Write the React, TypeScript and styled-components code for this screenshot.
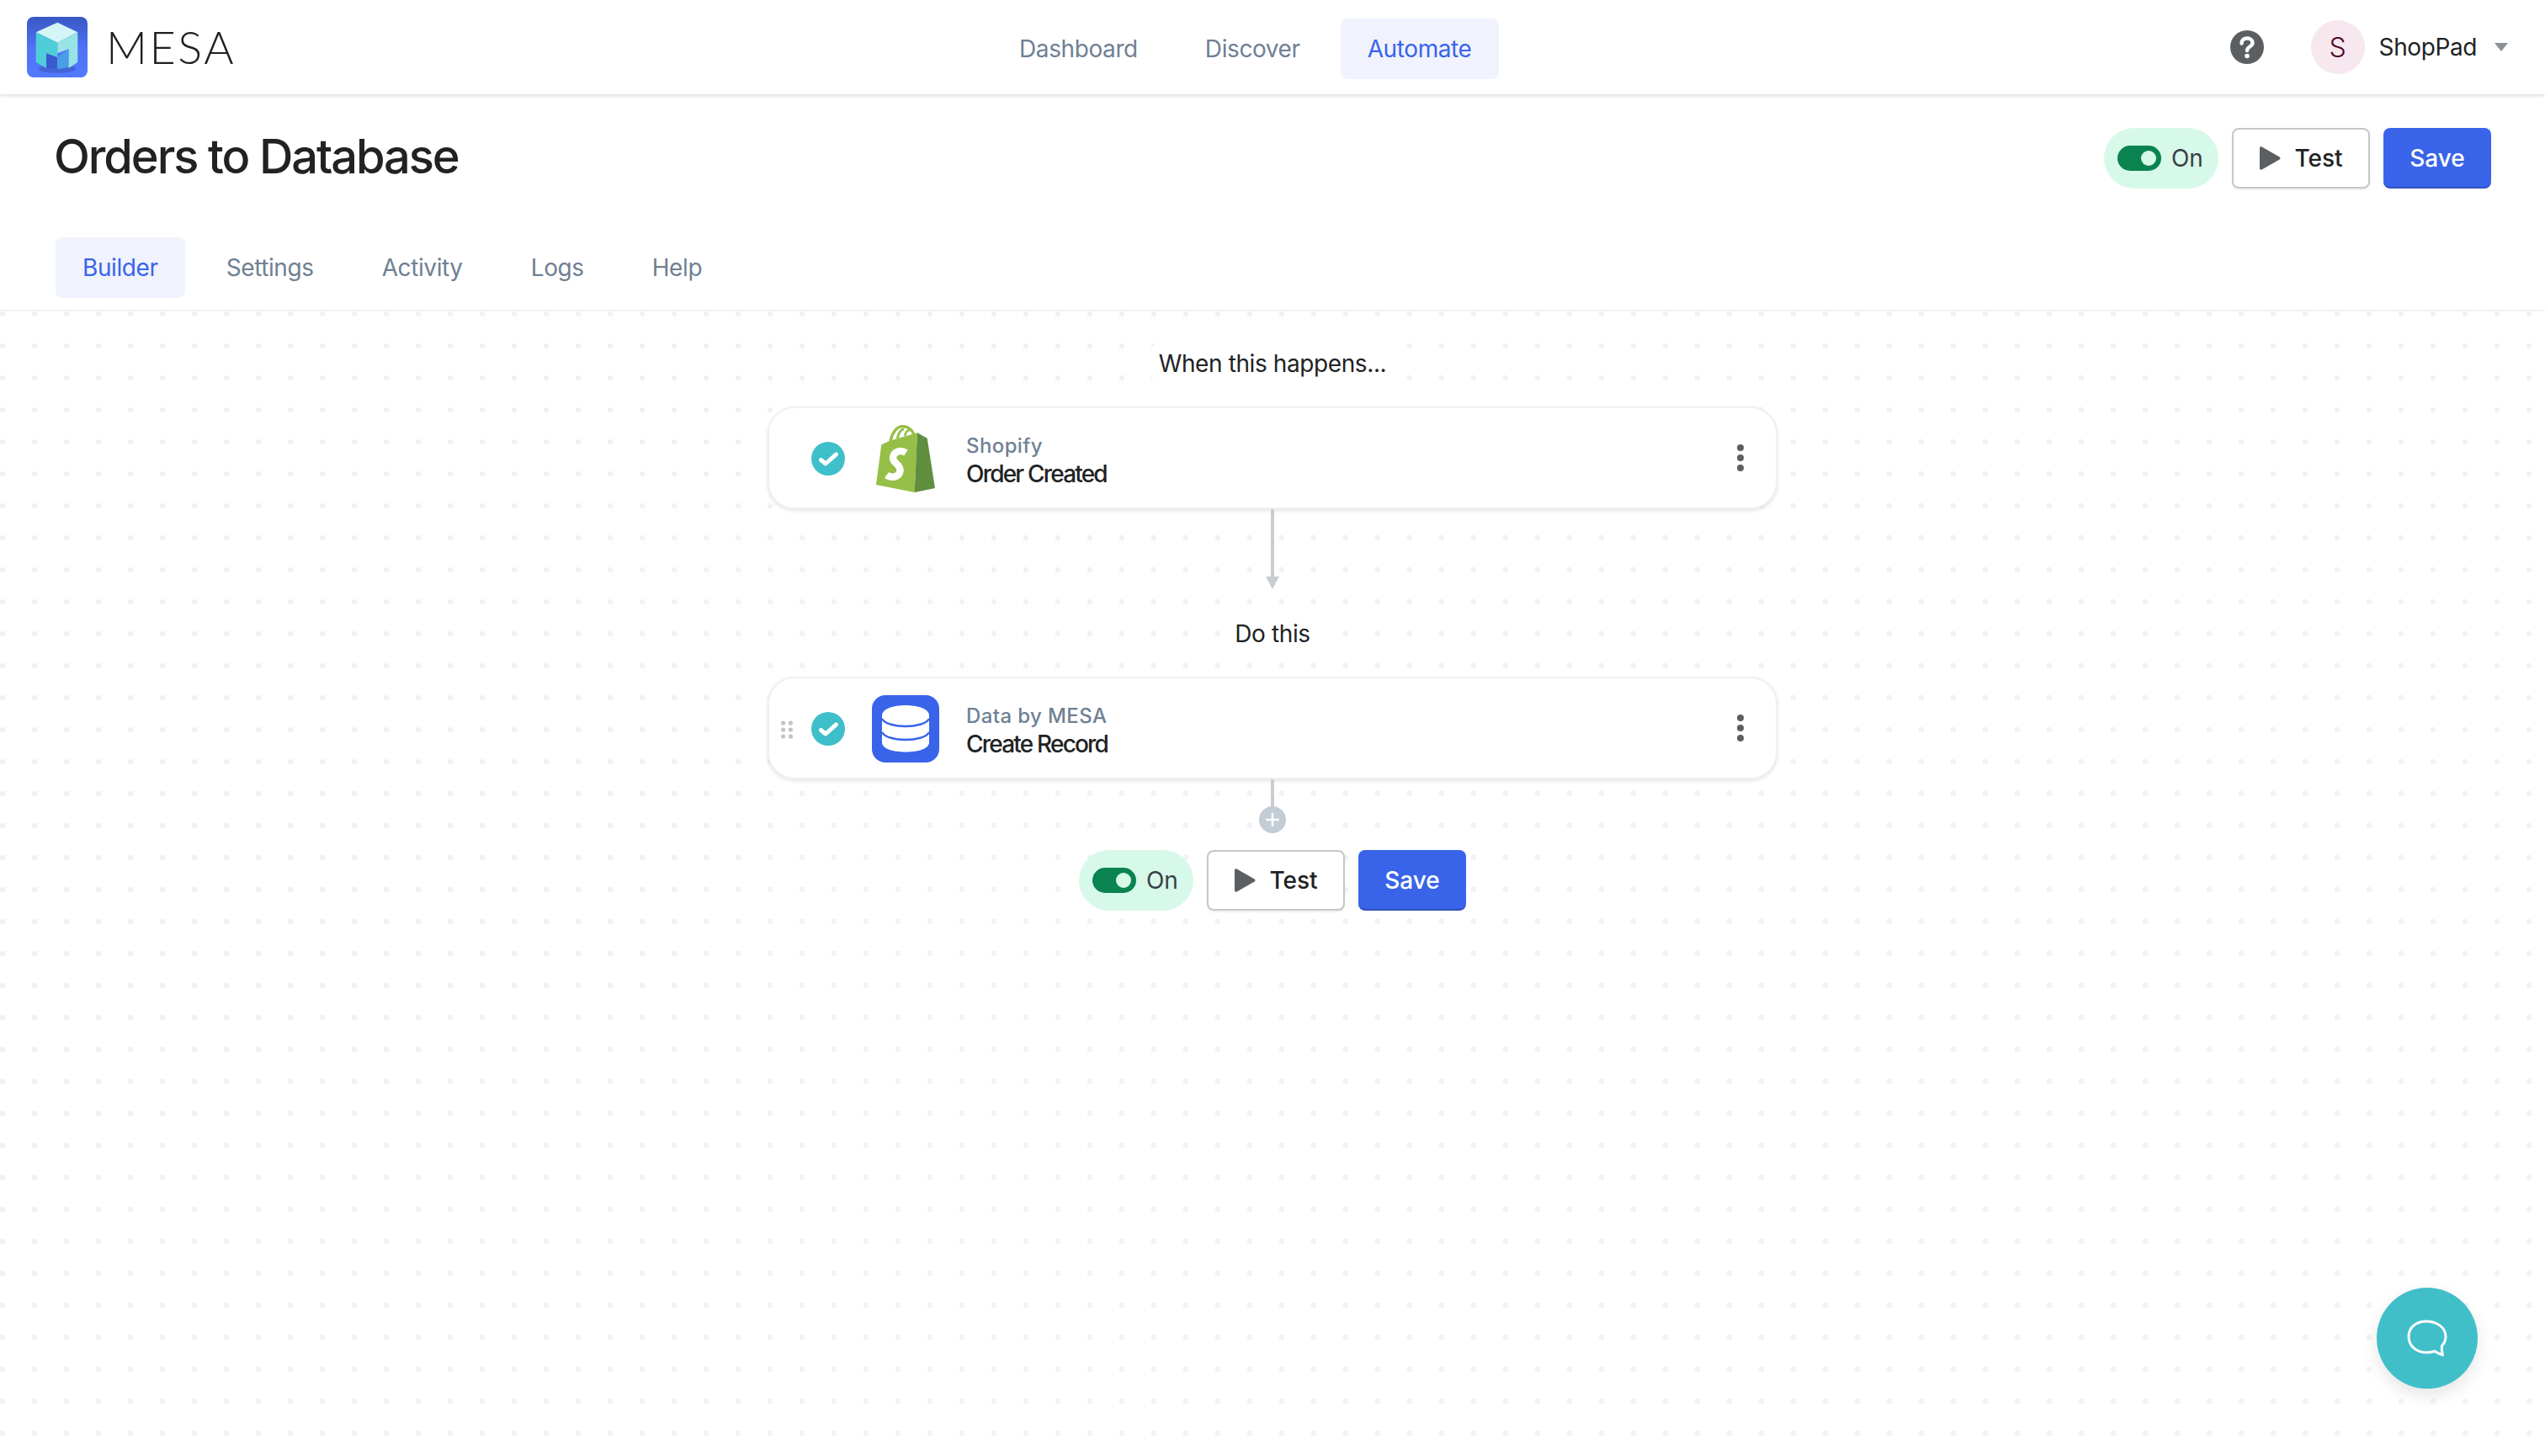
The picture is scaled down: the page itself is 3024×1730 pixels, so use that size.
import * as React from 'react'
import styled, { createGlobalStyle } from 'styled-components'

const GlobalStyle = createGlobalStyle`
  html, body {
    margin: 0;
    padding: 0;
    background: #fff;
    font-family: Inter, "Liberation Sans", sans-serif;
    color: #202223;
  }
  * {
    box-sizing: border-box;
  }
`

const Page = styled.div`
  width: 3024px;
  height: 1730px;
  overflow: hidden;
  display: flex;
  flex-direction: column;
`

const TopBar = styled.header`
  height: 112px;
  flex: none;
  display: flex;
  align-items: center;
  padding: 0 44px 0 32px;
  background: #fff;
  box-shadow: 0 2px 4px rgba(60, 66, 87, 0.18);
  position: relative;
  z-index: 1;
`

const Brand = styled.div`
  width: 244px;
  display: flex;
  align-items: center;
  gap: 22px;
`

const BrandName = styled.span`
  font-family: Lato, sans-serif;
  font-weight: 300;
  font-size: 54px;
  line-height: 72px;
  letter-spacing: 2.5px;
  color: #231f20;
`

const MainNav = styled.nav`
  margin-left: 903px;
  margin-top: 4px;
  display: flex;
  gap: 16px;
`

const TabLink = styled.a<{ $active?: boolean }>`
  height: 72px;
  padding: 0 32px;
  display: flex;
  align-items: center;
  border-radius: 8px;
  font-size: 28px;
  letter-spacing: -0.4px;
  color: ${p => (p.$active ? '#3964e9' : '#6f8094')};
  background: ${p => (p.$active ? '#f0f3fe' : 'transparent')};
`

const Account = styled.div`
  margin-left: auto;
  display: flex;
  align-items: center;
`

const Avatar = styled.div`
  width: 64px;
  height: 64px;
  margin-left: 56px;
  border-radius: 50%;
  display: flex;
  align-items: center;
  justify-content: center;
  background: #f6e8ee;
  color: #4f0a25;
  font-size: 32px;
  font-weight: 300;
`

const AccountName = styled.span`
  margin-left: 17px;
  font-size: 28px;
  letter-spacing: -0.4px;
`

const Caret = styled.span`
  margin-left: 21px;
  width: 0;
  height: 0;
  border-left: 8px solid transparent;
  border-right: 8px solid transparent;
  border-top: 10px solid #8c9196;
`

const PageHead = styled.div`
  height: 258px;
  flex: none;
  padding: 40px 64px 0 66px;
  border-bottom: 2px solid #f1f2f4;
  background: #fff;
`

const TitleRow = styled.div`
  display: flex;
  align-items: flex-start;
  justify-content: space-between;
`

const Title = styled.h1`
  margin: 0 0 0 -2px;
  font-size: 56px;
  line-height: 68px;
  font-weight: 500;
  letter-spacing: -2.1px;
  color: #202223;
`

const Tabs = styled.div`
  margin-top: 58px;
  display: flex;
  gap: 17px;
`

const Actions = styled.div`
  display: flex;
  align-items: center;
  gap: 16px;
`

const OnPill = styled.div`
  width: 136px;
  height: 72px;
  padding-left: 16px;
  display: flex;
  align-items: center;
  gap: 12px;
  border-radius: 36px;
  background: #d7f9e9;
  color: #3a3f44;
  font-size: 28px;
  letter-spacing: -0.2px;
`

const Track = styled.span`
  width: 52px;
  height: 30px;
  padding-right: 6px;
  display: flex;
  align-items: center;
  justify-content: flex-end;
  border-radius: 15px;
  background: #0a8350;
`

const Knob = styled.span`
  width: 18px;
  height: 18px;
  border-radius: 50%;
  background: #d7f9e9;
`

const TestButton = styled.button`
  width: 164px;
  height: 72px;
  display: flex;
  align-items: center;
  justify-content: center;
  gap: 16px;
  border: 2px solid #c4c7cc;
  border-radius: 8px;
  background: #fff;
  box-shadow: 0 2px 2px rgba(60, 66, 87, 0.08);
  color: #202223;
  font: 450 28px Inter, sans-serif;
`

const SaveButton = styled.button`
  width: 128px;
  height: 72px;
  padding: 2px 0 0;
  border: 0;
  border-bottom: 2px solid #2f50bd;
  border-radius: 8px;
  background: #3964e9;
  color: #fff;
  font: 450 28px Inter, sans-serif;
`

const Canvas = styled.main`
  flex: 1;
  display: flex;
  flex-direction: column;
  align-items: center;
  padding-top: 38px;
  background-color: #fff;
  background-image: radial-gradient(circle at 3px 3px, #f1f2f5 3px, transparent 3.6px);
  background-size: 38px 38px;
`

const StepLabel = styled.div`
  height: 48px;
  padding: 0 8px;
  display: flex;
  align-items: center;
  border-radius: 8px;
  background: #fff;
  font-size: 28px;
  letter-spacing: -0.4px;
  color: #202223;
`

const StepCard = styled.div`
  width: 1200px;
  height: 122px;
  margin-top: 27px;
  padding: 0 38px 0 14px;
  display: flex;
  align-items: center;
  border: 2px solid #eff0f2;
  border-radius: 32px;
  background: #fff;
  box-shadow: 0 2px 4px rgba(60, 66, 87, 0.14);
`

const GripSlot = styled.div`
  width: 36px;
  height: 22px;
  margin-top: 4px;
  flex: none;
  display: flex;
`

const CheckSlot = styled.div`
  width: 40px;
  height: 40px;
  margin-top: 2px;
  flex: none;
`

const LogoSlot = styled.div`
  width: 80px;
  height: 80px;
  margin: 2px 0 0 32px;
  flex: none;
  display: flex;
  justify-content: center;
`

const StepText = styled.div`
  margin-left: 32px;
  padding-top: 6px;
  flex: 1;
  display: flex;
  flex-direction: column;
  gap: 1px;
`

const AppName = styled.span`
  font-size: 24px;
  line-height: 30px;
  font-weight: 500;
  letter-spacing: 0.4px;
  color: #6f8094;
`

const StepName = styled.span`
  font-size: 28px;
  line-height: 34px;
  font-weight: 500;
  letter-spacing: -1.8px;
  color: #202223;
`

const Kebab = styled.div`
  display: flex;
  flex-direction: column;
  gap: 4px;
  i {
    width: 8px;
    height: 8px;
    border-radius: 50%;
    background: #5c5f62;
  }
`

const ArrowLine = styled.div`
  width: 4px;
  height: 80px;
  background: #c9cdd2;
`

const ArrowHead = styled.div`
  width: 0;
  height: 0;
  margin-bottom: 29px;
  border-left: 8px solid transparent;
  border-right: 8px solid transparent;
  border-top: 15px solid #c9cdd2;
`

const Connector = styled.div`
  width: 4px;
  height: 32px;
  background: #c9cdd2;
`

const AddButton = styled.div`
  width: 32px;
  height: 32px;
  margin-bottom: 20px;
  border-radius: 50%;
  display: flex;
  align-items: center;
  justify-content: center;
  background: #c4cdd5;
`

const ChatButton = styled.button`
  position: fixed;
  left: 2824px;
  top: 1530px;
  width: 120px;
  height: 120px;
  border: 0;
  border-radius: 50%;
  display: flex;
  align-items: center;
  justify-content: center;
  background: #40bfc9;
  box-shadow: 0 8px 20px rgba(0, 0, 0, 0.1);
`

const MesaLogo = () => (
  <svg width="72" height="72" viewBox="0 0 72 72" style={{ flex: 'none' }}>
    <defs>
      <linearGradient id="mesaBg" x1="0" y1="0" x2="0" y2="1">
        <stop offset="0" stopColor="#3a58c4" />
        <stop offset="0.55" stopColor="#4f74f8" />
        <stop offset="1" stopColor="#5379ff" />
      </linearGradient>
    </defs>
    <rect width="72" height="72" rx="8" fill="url(#mesaBg)" />
    <ellipse cx="36" cy="62" rx="22" ry="5" fill="#3a57c0" opacity="0.6" />
    <path d="M23 43 L36 48 V62 L23 61 Z" fill="#3a5bd0" />
    <path d="M36 48 L49.7 38 V60 L36 62 Z" fill="#4b9de6" />
    <path d="M36.3 6.7 L60.3 18.3 L36.3 30.7 L10.7 18.3 Z" fill="#d5f6f6" />
    <path d="M10.7 18.3 L36.3 30.7 V48 L23 43.3 V61 L10.7 54 Z" fill="#4fced9" />
    <path d="M36.3 30.7 L60.3 18.3 V54 L49.7 61 V38.3 L36.3 43.3 Z" fill="#97e3e6" />
  </svg>
)

const HelpIcon = () => (
  <svg width="40" height="40" viewBox="0 0 40 40">
    <circle cx="20" cy="20" r="20" fill="#5c5f62" />
    <path d="M13.5 15.5 C13.5 11.5 16.5 9.5 20 9.5 C24 9.5 26.5 12 26.5 15 C26.5 19.5 20 19.5 20 24" fill="none" stroke="#fff" strokeWidth="4.4" strokeLinecap="round" />
    <circle cx="20" cy="30.5" r="2.8" fill="#fff" />
  </svg>
)

const PlayIcon = () => (
  <svg width="26" height="28" viewBox="0 0 26 28">
    <path d="M1 2 C1 0.5 2.3 -0.2 3.6 0.6 L24.6 12.4 C25.8 13.1 25.8 14.9 24.6 15.6 L3.6 27.4 C2.3 28.2 1 27.5 1 26 Z" fill="#5c5f62" />
  </svg>
)

const CheckIcon = () => (
  <svg width="40" height="40" viewBox="0 0 40 40">
    <circle cx="20" cy="20" r="20" fill="#3ebfc9" />
    <path d="M11.5 21.5 L17 26 L29.5 14.8" fill="none" stroke="#fff" strokeWidth="5" strokeLinecap="round" strokeLinejoin="round" />
  </svg>
)

const ShopifyLogo = () => (
  <svg width="70" height="80" viewBox="0 0 70 80">
    <path d="M17 19 C19 9 25 1.5 31 1.5 C38 1.5 43.5 6 45 12" fill="none" stroke="#95bf47" strokeWidth="3.4" />
    <path d="M25 16 C27 9 30 5 33 5" fill="none" stroke="#95bf47" strokeWidth="3" />
    <path d="M34 13 C35 9 37 6 40 6" fill="none" stroke="#95bf47" strokeWidth="2.6" />
    <path d="M0 71 L6.3 23.3 L17.3 18.3 L49 9.3 L45.7 80 Z" fill="#95bf47" />
    <path d="M49 9.3 L60.7 15.7 L70 75 L45.7 80 Z" fill="#5e8e3e" />
    <path d="M35.5 33 C30 29.5 21 30.5 20 38.5 C19.2 45.5 29.5 46.5 28.5 54.5 C27.7 62 18 63.5 12.5 59.5" fill="none" stroke="#fff" strokeWidth="8.4" />
  </svg>
)

const DataLogo = () => (
  <svg width="80" height="80" viewBox="0 0 80 80">
    <rect width="80" height="80" rx="16" fill="#3964e9" />
    <path d="M12 24 C12 16 26 12 40 12 C54 12 68 16 68 24 V56 C68 64 54 67.5 40 67.5 C26 67.5 12 64 12 56 Z" fill="#fff" />
    <path d="M12 28 C15 34 28 37 40 37 C52 37 65 34 68 28" fill="none" stroke="#3964e9" strokeWidth="2.4" />
    <path d="M12 44 C15 50 28 53 40 53 C52 53 65 50 68 44" fill="none" stroke="#3964e9" strokeWidth="2.4" />
  </svg>
)

const GripIcon = () => (
  <svg width="14" height="22" viewBox="0 0 14 22">
    {[3, 11, 19].map(y => (
      <React.Fragment key={y}>
        <circle cx="2.6" cy={y} r="2.6" fill="#c0c3c8" />
        <circle cx="11.4" cy={y} r="2.6" fill="#c0c3c8" />
      </React.Fragment>
    ))}
  </svg>
)

const ChatIcon = () => (
  <svg width="48" height="44" viewBox="0 0 48 44">
    <path d="M23 2 C35 2 46 9 46 20 C46 25 44 28.5 41.5 31 C41 34 41.5 38 42.5 42 C39.5 41 36 39.5 33 37.5 C30 38.5 27 39 23 39 C11 39 2 31 2 20 C2 9 11 2 23 2 Z" fill="none" stroke="#fff" strokeWidth="3" strokeLinejoin="round" />
  </svg>
)

const PageActions = () => (
  <Actions>
    <OnPill>
      <Track>
        <Knob />
      </Track>
      On
    </OnPill>
    <TestButton>
      <PlayIcon />
      Test
    </TestButton>
    <SaveButton>Save</SaveButton>
  </Actions>
)

const Step = ({ logo, app, name, grip }: { logo: React.ReactNode; app: string; name: string; grip?: boolean }) => (
  <StepCard>
    <GripSlot>{grip && <GripIcon />}</GripSlot>
    <CheckSlot>
      <CheckIcon />
    </CheckSlot>
    <LogoSlot>{logo}</LogoSlot>
    <StepText>
      <AppName>{app}</AppName>
      <StepName>{name}</StepName>
    </StepText>
    <Kebab>
      <i />
      <i />
      <i />
    </Kebab>
  </StepCard>
)

export default function App() {
  return (
    <Page>
      <GlobalStyle />
      <TopBar>
        <Brand>
          <MesaLogo />
          <BrandName>MESA</BrandName>
        </Brand>
        <MainNav>
          <TabLink>Dashboard</TabLink>
          <TabLink>Discover</TabLink>
          <TabLink $active>Automate</TabLink>
        </MainNav>
        <Account>
          <HelpIcon />
          <Avatar>S</Avatar>
          <AccountName>ShopPad</AccountName>
          <Caret />
        </Account>
      </TopBar>
      <PageHead>
        <TitleRow>
          <Title>Orders to Database</Title>
          <PageActions />
        </TitleRow>
        <Tabs>
          <TabLink $active>Builder</TabLink>
          <TabLink>Settings</TabLink>
          <TabLink>Activity</TabLink>
          <TabLink>Logs</TabLink>
          <TabLink>Help</TabLink>
        </Tabs>
      </PageHead>
      <Canvas>
        <StepLabel>When this happens...</StepLabel>
        <Step logo={<ShopifyLogo />} app="Shopify" name="Order Created" />
        <ArrowLine />
        <ArrowHead />
        <StepLabel>Do this</StepLabel>
        <Step logo={<DataLogo />} app="Data by MESA" name="Create Record" grip />
        <Connector />
        <AddButton>
          <svg width="16" height="16" viewBox="0 0 16 16">
            <path d="M8 1 V15 M1 8 H15" stroke="#fff" strokeWidth="2.6" strokeLinecap="round" />
          </svg>
        </AddButton>
        <PageActions />
      </Canvas>
      <ChatButton>
        <ChatIcon />
      </ChatButton>
    </Page>
  )
}
